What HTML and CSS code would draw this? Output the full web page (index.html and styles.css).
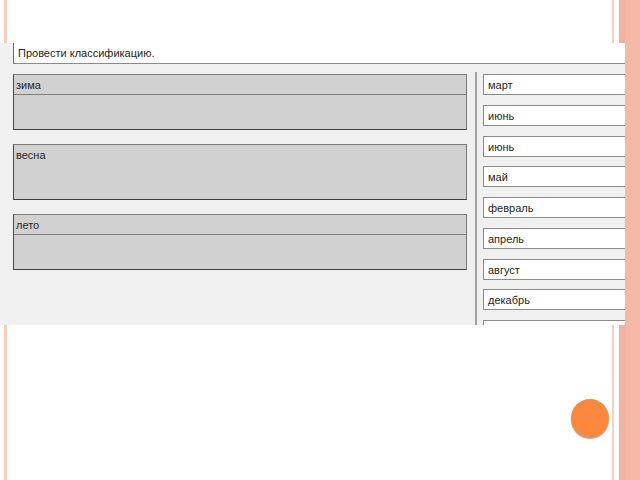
FILE: index.html
```html
<!DOCTYPE html>
<html lang="ru">
<head>
<meta charset="utf-8">
<title>Провести классификацию</title>
<link rel="stylesheet" href="styles.css">
</head>
<body>
<div class="stripe stripe-left"></div>
<div class="stripe stripe-r1"></div>
<div class="stripe stripe-r2"></div>
<div class="stripe stripe-band"></div>

<div class="panel">
  <div class="task">Провести классификацию.</div>
  <div class="workarea">
    <div class="groups">
      <div class="group">
        <div class="group-head">зима</div>
      </div>
      <div class="group">
        <div class="group-head plain">весна</div>
      </div>
      <div class="group">
        <div class="group-head">лето</div>
      </div>
    </div>
    <div class="divider"></div>
    <div class="items">
      <div class="item">март</div>
      <div class="item">июнь</div>
      <div class="item">июнь</div>
      <div class="item">май</div>
      <div class="item">февраль</div>
      <div class="item">апрель</div>
      <div class="item">август</div>
      <div class="item">декабрь</div>
      <div class="item"></div>
    </div>
  </div>
</div>

<div class="dot"></div>
</body>
</html>
```

FILE: styles.css
```css
html, body {
  margin: 0;
  padding: 0;
  background: #ffffff;
}

body {
  width: 640px;
  height: 480px;
  position: relative;
  overflow: hidden;
  font-family: "Liberation Sans", Arial, sans-serif;
  font-size: 11px;
  color: #262626;
}

.stripe {
  position: absolute;
  top: 0;
  bottom: 0;
  z-index: 0;
}

.stripe-left {
  left: 4px;
  width: 3px;
  background: #fccdb9;
}

.stripe-r1 {
  left: 612px;
  width: 2px;
  background: #f9d0c1;
}

.stripe-r2 {
  left: 619px;
  width: 6px;
  background: #f2b4a0;
}

.stripe-band {
  left: 625px;
  width: 15px;
  background: #f3b9a6;
  z-index: 2;
}

.panel {
  position: relative;
  z-index: 1;
  margin-top: 43px;
  width: 625px;
  height: 282px;
  background: #f0f0f0;
  overflow: hidden;
  display: flex;
  flex-direction: column;
  gap: 10px;
}

.task {
  margin-left: 13px;
  height: 20px;
  line-height: 21px;
  padding-left: 4px;
  background: #ffffff;
  border-left: 1px solid #6f6f6f;
  border-bottom: 1px solid #8a8a8a;
}

.workarea {
  flex: 1;
  display: flex;
  align-items: stretch;
  margin-left: 13px;
}

.groups {
  width: 454px;
  display: flex;
  flex-direction: column;
  gap: 14px;
}

.group {
  height: 54px;
  background: #d1d1d1;
  border: 1px solid #7a7a7a;
  border-bottom-color: #3c3c3c;
  border-left-color: #4a4a4a;
}

.group-head {
  height: 19px;
  line-height: 20px;
  padding-left: 2px;
  border-bottom: 1px solid #7e7e7e;
}

.group-head.plain {
  border-bottom-color: transparent;
}

.divider {
  width: 2px;
  margin: -2px 6px 0 8px;
  background: #a0a0a0;
}

.items {
  flex: 1;
  display: flex;
  flex-direction: column;
  gap: 9.75px;
}

.item {
  flex: none;
  height: 19px;
  line-height: 20px;
  padding-left: 4px;
  background: #ffffff;
  border: 1px solid #8c8c8c;
  border-right: none;
}

.dot {
  position: absolute;
  left: 571px;
  top: 399px;
  width: 38px;
  height: 38px;
  border-radius: 50%;
  background: #fb883c;
  box-shadow: 0 2px 1px rgba(130, 80, 50, 0.55);
  z-index: 1;
}
```
